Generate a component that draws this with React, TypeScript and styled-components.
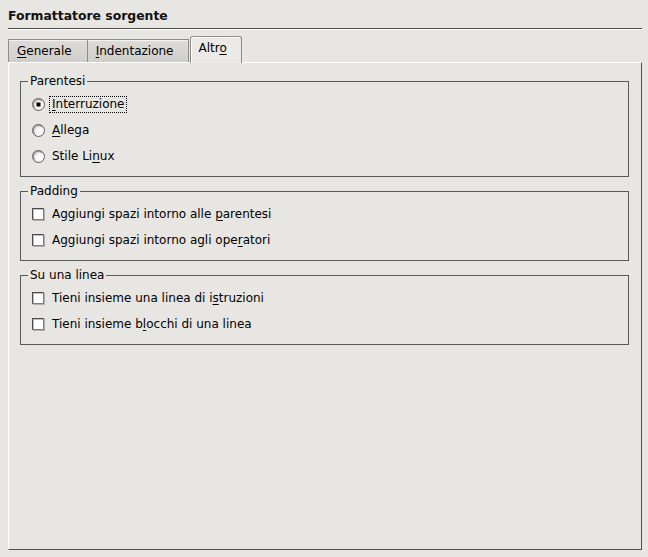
import React from "react";
import styled, { createGlobalStyle } from "styled-components";

const Global = createGlobalStyle`
  html, body { margin: 0; padding: 0; background: #e8e6e3; }
  body {
    font-family: "DejaVu Sans", "Liberation Sans", sans-serif;
    font-size: 12px;
    color: #000;
  }
`;

const Page = styled.div`
  box-sizing: border-box;
  width: 648px;
  height: 557px;
  padding: 8px 6px 7px 8px;
  display: flex;
  flex-direction: column;
  background: #e8e6e3;
`;

const Title = styled.div`
  font-weight: bold;
  font-size: 12.4px;
  line-height: 15px;
  color: #111;
`;

const Separator = styled.div`
  margin-top: 5px;
  border-top: 1px solid #4f4f4f;
  border-bottom: 1px solid #fff;
`;

const TabBar = styled.div`
  margin-top: 6px;
  height: 26px;
  display: flex;
  align-items: flex-end;
`;

const Tab = styled.div<{ $active?: boolean }>`
  box-sizing: border-box;
  position: relative;
  z-index: ${(p) => (p.$active ? 1 : 0)};
  height: ${(p) => (p.$active ? "27px" : "23px")};
  margin-right: -1px;
  margin-left: ${(p) => (p.$active ? "2px" : "0")};
  margin-bottom: ${(p) => (p.$active ? "-1px" : "0")};
  padding: ${(p) => (p.$active ? "4px 14px 0 7px" : "4px 15px 0 8px")};
  border: 1px solid #8e8d8a;
  border-bottom: none;
  border-radius: ${(p) => (p.$active ? "3px 3px 0 0" : "0")};
  background: ${(p) =>
    p.$active ? "#eceae7" : "linear-gradient(#dedcd9, #d0cecb)"};
  box-shadow: ${(p) =>
    p.$active ? "inset 1px 1px 0 #fff" : "inset 0 1px 0 #f4f3f1"};
  line-height: 15px;
  white-space: nowrap;
`;

const Panel = styled.div`
  flex: 1;
  box-sizing: border-box;
  border: 1px solid;
  border-color: #fff #4f4f4f #4f4f4f #fff;
  padding: 11px 12px 0 11px;
  display: flex;
  flex-direction: column;
  gap: 7px;
`;

const Group = styled.fieldset`
  margin: 0;
  min-width: 0;
  border: 1px solid #5a5a5a;
  padding: 3px 8px 7px 7px;
  display: flex;
  flex-direction: column;
`;

const Legend = styled.legend`
  padding: 0 2px;
  margin: 0;
  line-height: 14px;
  font-size: 12px;
`;

const Row = styled.div`
  height: 26px;
  display: flex;
  align-items: center;
  padding-left: 4px;
  gap: 4px;
`;

const Label = styled.span<{ $focused?: boolean }>`
  padding: 0 2px;
  border: 1px dotted ${(p) => (p.$focused ? "#000" : "transparent")};
  line-height: 15px;
  white-space: nowrap;
`;

const Mn = styled.span`
  text-decoration: underline;
  text-underline-offset: 2px;
`;

const CheckBox = styled.span`
  box-sizing: border-box;
  display: inline-block;
  flex: none;
  width: 12px;
  height: 12px;
  margin-right: 1px;
  border: 1px solid;
  border-color: #4a4a4a #7d7d7d #7d7d7d #4a4a4a;
  background: #fff;
  box-shadow: inset 1px 1px 0 #c0c0c0, 1px 1px 0 #b2b0ad;
`;

const RadioSvg = styled.svg`
  display: block;
  flex: none;
`;

function Radio({ checked, id }: { checked?: boolean; id: string }) {
  return (
    <RadioSvg width="13" height="13" viewBox="0 0 13 13">
      <defs>
        <radialGradient id={id} cx="0.62" cy="0.62" r="0.62">
          <stop offset="0" stopColor="#ffffff" />
          <stop offset="0.6" stopColor="#f4f4f4" />
          <stop offset="1" stopColor="#b0b0b0" />
        </radialGradient>
      </defs>
      <circle cx="6.5" cy="6.5" r="6" fill={`url(#${id})`} stroke="#5e5e5e" />
      <path
        d="M2.4 9.6 A4.9 4.9 0 0 1 9.6 2.4"
        stroke="#8a8a8a"
        strokeWidth="1.4"
        fill="none"
      />
      {checked && <rect x="4.5" y="4.5" width="4" height="4" fill="#000" />}
    </RadioSvg>
  );
}

function Check() {
  return <CheckBox />;
}

export default function App() {
  return (
    <>
      <Global />
      <Page>
        <Title>Formattatore sorgente</Title>
        <Separator />
        <TabBar>
          <Tab>
            <Mn>G</Mn>enerale
          </Tab>
          <Tab>
            <Mn>I</Mn>ndentazione
          </Tab>
          <Tab $active>
            Altr<Mn>o</Mn>
          </Tab>
        </TabBar>
        <Panel>
          <Group>
            <Legend>Parentesi</Legend>
            <Row>
              <Radio id="r1" checked />
              <Label $focused>
                <Mn>I</Mn>nterruzione
              </Label>
            </Row>
            <Row>
              <Radio id="r2" />
              <Label>
                <Mn>A</Mn>llega
              </Label>
            </Row>
            <Row>
              <Radio id="r3" />
              <Label>
                Stile Li<Mn>n</Mn>ux
              </Label>
            </Row>
          </Group>
          <Group>
            <Legend>Padding</Legend>
            <Row>
              <Check />
              <Label>
                Aggiungi spazi intorno alle <Mn>p</Mn>arentesi
              </Label>
            </Row>
            <Row>
              <Check />
              <Label>
                Aggiungi spazi intorno agli ope<Mn>r</Mn>atori
              </Label>
            </Row>
          </Group>
          <Group>
            <Legend>Su una linea</Legend>
            <Row>
              <Check />
              <Label>
                Tieni insieme una linea di i<Mn>s</Mn>truzioni
              </Label>
            </Row>
            <Row>
              <Check />
              <Label>
                Tieni insieme b<Mn>l</Mn>occhi di una linea
              </Label>
            </Row>
          </Group>
        </Panel>
      </Page>
    </>
  );
}
